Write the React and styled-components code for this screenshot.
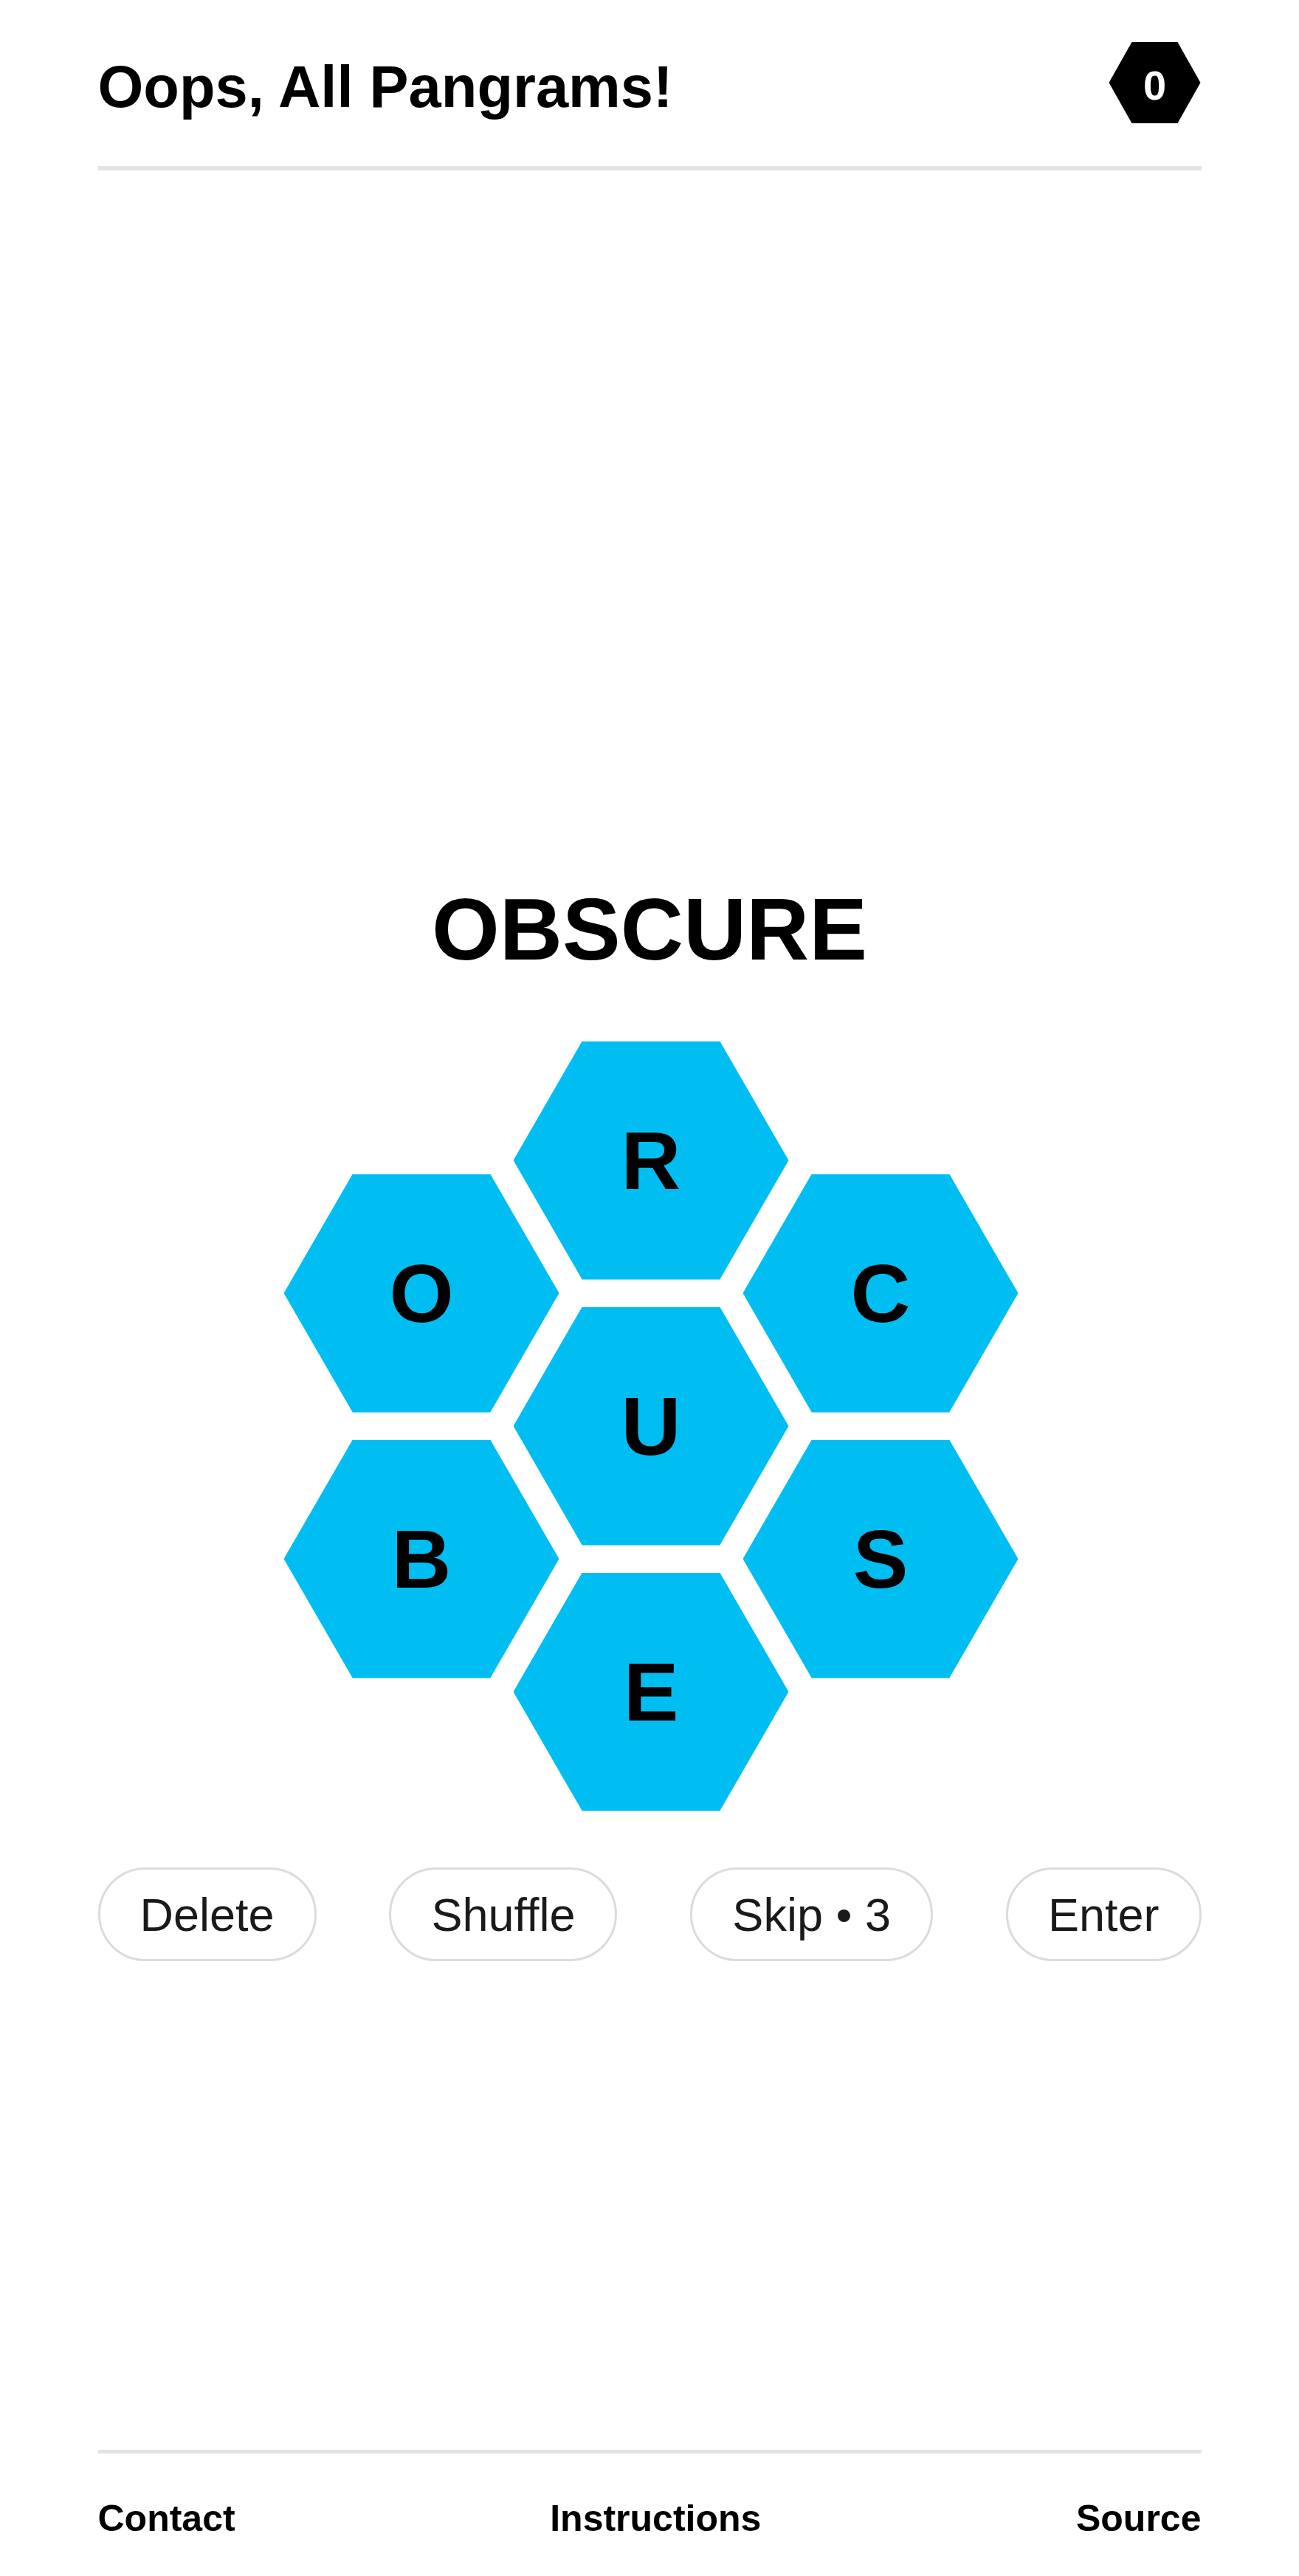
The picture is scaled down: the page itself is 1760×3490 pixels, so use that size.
import React, { useState } from "react";
import styled, { createGlobalStyle } from "styled-components";

const GlobalStyle = createGlobalStyle`
  html, body {
    margin: 0;
    padding: 0;
    background: #fff;
  }
  body {
    font-family: "Liberation Sans", Arial, Helvetica, sans-serif;
    color: #000;
  }
`;

const HEX_CLIP = "polygon(25% 0, 75% 0, 100% 50%, 75% 100%, 25% 100%, 0 50%)";

const Page = styled.div`
  width: 1495px;
  margin: 0 auto;
  min-height: 100vh;
  display: flex;
  flex-direction: column;
`;

const Header = styled.header`
  display: flex;
  justify-content: space-between;
  align-items: center;
  height: 110px;
  padding: 57px 0 58px;
  border-bottom: 6px solid #e3e3e3;
`;

const Title = styled.h1`
  margin: 0;
  padding-top: 11px;
  font-size: 79.5px;
  line-height: 78px;
  font-weight: 700;
`;

const ScoreBadge = styled.div`
  width: 124px;
  height: 110px;
  margin-right: 1px;
  background: #000;
  color: #fff;
  clip-path: ${HEX_CLIP};
  display: flex;
  align-items: center;
  justify-content: center;
  font-size: 56px;
  font-weight: 700;
  padding-top: 6px;
  box-sizing: border-box;
`;

const Main = styled.main`
  display: flex;
  flex-direction: column;
  align-items: center;
  padding-top: 969px;
`;

const Word = styled.div`
  font-size: 118px;
  line-height: 118px;
  font-weight: 700;
`;

const Hive = styled.div`
  margin-top: 74px;
  margin-left: 4px;
  display: grid;
  grid-template-columns: repeat(3, 311px);
  grid-template-rows: repeat(6, 180px);
`;

const Cell = styled.button`
  grid-column: ${(p) => p.$col};
  grid-row: ${(p) => p.$row} / span 2;
  justify-self: center;
  align-self: center;
  width: 373px;
  height: 323px;
  border: 0;
  padding: 0;
  background: #00bef2;
  clip-path: ${HEX_CLIP};
  display: flex;
  align-items: center;
  justify-content: center;
  font-family: "Liberation Sans", Arial, sans-serif;
  font-size: 112px;
  font-weight: 700;
  color: #000;
  cursor: pointer;
`;

const Controls = styled.div`
  align-self: stretch;
  margin-top: 58px;
  display: flex;
  justify-content: space-between;
`;

const PillButton = styled.button`
  height: 127px;
  box-sizing: border-box;
  padding: 0 54px;
  border: 3px solid #dcdcdc;
  border-radius: 64px;
  background: #fff;
  font-family: "Liberation Sans", Arial, sans-serif;
  font-size: 63px;
  color: #1a1a1a;
  display: flex;
  align-items: center;
  justify-content: center;
  cursor: pointer;
`;

const Footer = styled.footer`
  margin-top: auto;
  border-top: 5px solid #e3e3e3;
  padding: 63px 0 53px;
  display: flex;
  justify-content: space-between;
`;

const FooterLink = styled.a`
  font-size: 50px;
  line-height: 50px;
  font-weight: 700;
  color: #000;
  text-decoration: none;
`;

const cells = [
  { letter: "R", col: 2, row: 1 },
  { letter: "O", col: 1, row: 2 },
  { letter: "C", col: 3, row: 2 },
  { letter: "U", col: 2, row: 3 },
  { letter: "B", col: 1, row: 4 },
  { letter: "S", col: 3, row: 4 },
  { letter: "E", col: 2, row: 5 },
];

export default function App() {
  const [score] = useState(0);
  const [skips] = useState(3);

  return (
    <>
      <GlobalStyle />
      <Page>
        <Header>
          <Title>Oops, All Pangrams!</Title>
          <ScoreBadge>{score}</ScoreBadge>
        </Header>

        <Main>
          <Word>OBSCURE</Word>
          <Hive>
            {cells.map((c) => (
              <Cell key={c.letter} $col={c.col} $row={c.row}>
                {c.letter}
              </Cell>
            ))}
          </Hive>
          <Controls>
            <PillButton>Delete</PillButton>
            <PillButton>Shuffle</PillButton>
            <PillButton>Skip • {skips}</PillButton>
            <PillButton>Enter</PillButton>
          </Controls>
        </Main>

        <Footer>
          <FooterLink href="#">Contact</FooterLink>
          <FooterLink href="#">Instructions</FooterLink>
          <FooterLink href="#">Source</FooterLink>
        </Footer>
      </Page>
    </>
  );
}
